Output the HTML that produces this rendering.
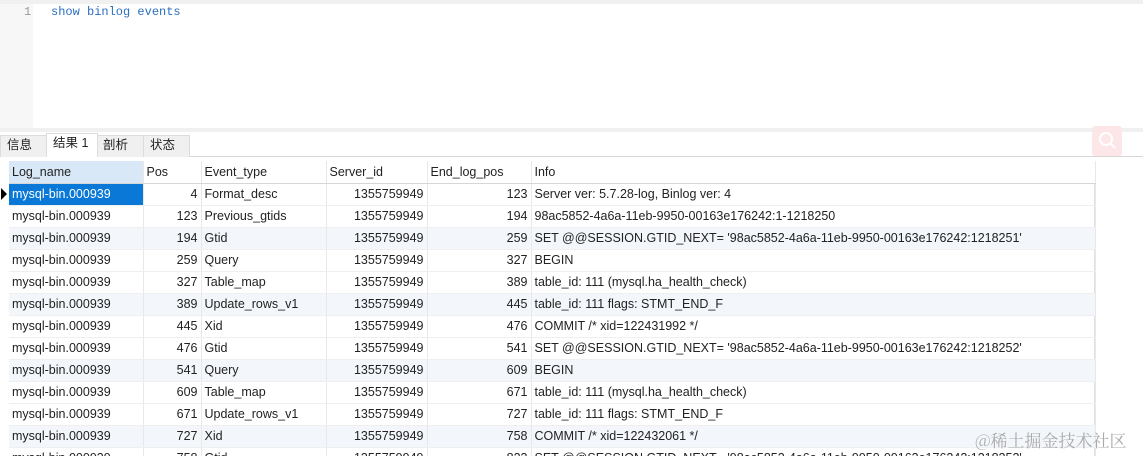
<!DOCTYPE html><html><head><meta charset="utf-8"><style>
*{margin:0;padding:0;box-sizing:border-box}
html,body{width:1143px;height:456px;overflow:hidden}
body{background:#fff;font-family:"Liberation Sans","Noto Sans CJK SC",sans-serif;font-size:12.5px;color:#222;position:relative}
.topbar{position:absolute;left:0;top:0;width:1143px;height:4px;background:#f0f0f0}
.gut{position:absolute;left:0;top:4px;width:33px;height:124px;background:#f7f7f7}
.ln{position:absolute;left:24px;top:5px;color:#999;font-family:"Liberation Mono",monospace;font-size:12px}
.code{position:absolute;left:51px;top:5px;color:#2a6fc0;font-family:"Liberation Mono",monospace;font-size:12px}
.sep{position:absolute;left:0;top:128px;width:1143px;height:4px;background:#f0f0f0}
.tabs{position:absolute;left:0;top:133px;height:24px;width:1143px;border-bottom:1px solid #d6d6d6}
.tab{position:absolute;top:2px;height:22px;background:#f0f0f0;border:1px solid #dcdcdc;border-bottom:none;padding-left:6px;line-height:18px;font-size:12.5px}
.tab.act{background:#fff;top:0;height:24px;line-height:18px}
.search{position:absolute;left:1092px;top:126px;width:30px;height:30px;background:#fde6e8;border-radius:3px}
table{position:absolute;left:9px;top:161px;border-collapse:collapse;table-layout:fixed}
td,th{height:22px;padding:0 3px;white-space:nowrap;overflow:hidden;border-right:1px solid #e8e8e8;border-bottom:1px solid #efefef;font-weight:normal;text-align:left}
th{background:#fff;border-bottom:1px solid #d6d6d6}
th.sel{background:#d9e8f7}
td.r{text-align:right}
tr.s td{background:#f3f7fb}
td.sel{background:#0a78d7;color:#fff}
.arrow{position:absolute;left:1px;top:188px;width:0;height:0;border-left:6px solid #000;border-top:6px solid transparent;border-bottom:6px solid transparent}
.vl{position:absolute;left:1094px;top:161px;width:1px;height:295px;background:#e0e0e0}
.wm{position:absolute;left:975px;top:427px;font-size:17px;color:#aaa;font-family:"Noto Serif CJK SC",serif}
</style></head><body>
<div class="topbar"></div><div class="gut"></div>
<div class="ln">1</div><div class="code">show binlog events</div>
<div class="sep"></div>
<div class="tabs">
<div class="tab" style="left:0;width:47px">信息</div>
<div class="tab act" style="left:46px;width:52px">结果 1</div>
<div class="tab" style="left:97px;width:47px;padding-left:5px">剖析</div>
<div class="tab" style="left:143px;width:47px">状态</div>
</div>
<div class="search"><svg width="30" height="30"><circle cx="14" cy="13" r="6" fill="none" stroke="#fff" stroke-width="2"/><line x1="18" y1="17" x2="23" y2="22" stroke="#fff" stroke-width="2"/></svg></div>
<div class="vl"></div>
<div class="arrow"></div>
<table>
<colgroup><col style="width:134px"><col style="width:58px"><col style="width:125px"><col style="width:101px"><col style="width:104px"><col style="width:564px"></colgroup>
<tr><th class="sel">Log_name</th><th>Pos</th><th>Event_type</th><th>Server_id</th><th>End_log_pos</th><th>Info</th></tr>
<tr><td class="sel">mysql-bin.000939</td><td class="r">4</td><td>Format_desc</td><td class="r">1355759949</td><td class="r">123</td><td>Server ver: 5.7.28-log, Binlog ver: 4</td></tr>
<tr><td>mysql-bin.000939</td><td class="r">123</td><td>Previous_gtids</td><td class="r">1355759949</td><td class="r">194</td><td>98ac5852-4a6a-11eb-9950-00163e176242:1-1218250</td></tr>
<tr class="s"><td>mysql-bin.000939</td><td class="r">194</td><td>Gtid</td><td class="r">1355759949</td><td class="r">259</td><td>SET @@SESSION.GTID_NEXT= '98ac5852-4a6a-11eb-9950-00163e176242:1218251'</td></tr>
<tr><td>mysql-bin.000939</td><td class="r">259</td><td>Query</td><td class="r">1355759949</td><td class="r">327</td><td>BEGIN</td></tr>
<tr><td>mysql-bin.000939</td><td class="r">327</td><td>Table_map</td><td class="r">1355759949</td><td class="r">389</td><td>table_id: 111 (mysql.ha_health_check)</td></tr>
<tr class="s"><td>mysql-bin.000939</td><td class="r">389</td><td>Update_rows_v1</td><td class="r">1355759949</td><td class="r">445</td><td>table_id: 111 flags: STMT_END_F</td></tr>
<tr><td>mysql-bin.000939</td><td class="r">445</td><td>Xid</td><td class="r">1355759949</td><td class="r">476</td><td>COMMIT /* xid=122431992 */</td></tr>
<tr><td>mysql-bin.000939</td><td class="r">476</td><td>Gtid</td><td class="r">1355759949</td><td class="r">541</td><td>SET @@SESSION.GTID_NEXT= '98ac5852-4a6a-11eb-9950-00163e176242:1218252'</td></tr>
<tr class="s"><td>mysql-bin.000939</td><td class="r">541</td><td>Query</td><td class="r">1355759949</td><td class="r">609</td><td>BEGIN</td></tr>
<tr><td>mysql-bin.000939</td><td class="r">609</td><td>Table_map</td><td class="r">1355759949</td><td class="r">671</td><td>table_id: 111 (mysql.ha_health_check)</td></tr>
<tr><td>mysql-bin.000939</td><td class="r">671</td><td>Update_rows_v1</td><td class="r">1355759949</td><td class="r">727</td><td>table_id: 111 flags: STMT_END_F</td></tr>
<tr class="s"><td>mysql-bin.000939</td><td class="r">727</td><td>Xid</td><td class="r">1355759949</td><td class="r">758</td><td>COMMIT /* xid=122432061 */</td></tr>
<tr><td>mysql-bin.000939</td><td class="r">758</td><td>Gtid</td><td class="r">1355759949</td><td class="r">823</td><td>SET @@SESSION.GTID_NEXT= '98ac5852-4a6a-11eb-9950-00163e176242:1218253'</td></tr>
</table>
<div class="wm">@稀土掘金技术社区</div>
</body></html>
